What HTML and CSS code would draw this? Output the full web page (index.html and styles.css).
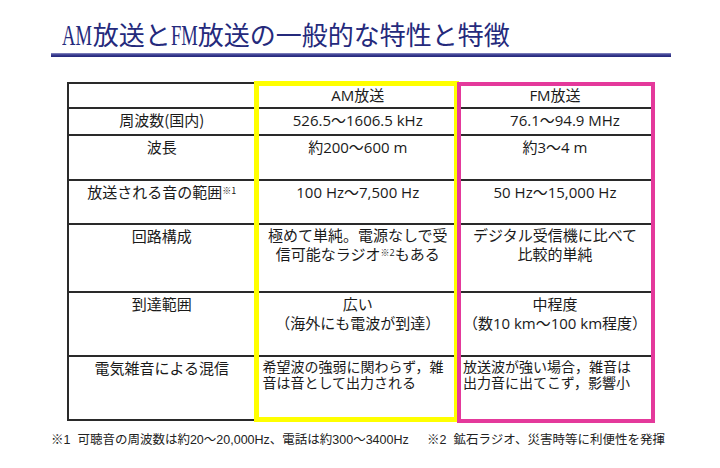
FILE: index.html
```html
<!DOCTYPE html>
<html lang="ja">
<head>
<meta charset="utf-8">
<title>AM放送とFM放送の一般的な特性と特徴</title>
<link rel="stylesheet" href="styles.css">
</head>
<body>
<div class="page">
  <h1 class="title"><span class="lat lat-am">AM</span>放送と<span class="lat lat-fm">FM</span>放送の一般的な特性と特徴</h1>
  <div class="rule"></div>

  <div class="tbl-wrap">
    <div class="tbl">
      <div class="c k"></div>
      <div class="c v">AM放送</div>
      <div class="c v">FM放送</div>

      <div class="c k">周波数(国内)</div>
      <div class="c v">526.5～1606.5 kHz</div>
      <div class="c v shift">76.1～94.9 MHz</div>

      <div class="c k">波長</div>
      <div class="c v">約200～600 m</div>
      <div class="c v">約3～4 m</div>

      <div class="c k">放送される音の範囲<sup class="note">※1</sup></div>
      <div class="c v">100 Hz～7,500 Hz</div>
      <div class="c v">50 Hz～15,000 Hz</div>

      <div class="c k">回路構成</div>
      <div class="c v multi">極めて単純。電源なしで受<br>信可能なラジオ<sup class="note">※2</sup>もある</div>
      <div class="c v multi">デジタル受信機に比べて<br>比較的単純</div>

      <div class="c k">到達範囲</div>
      <div class="c v multi2">広い<br>（海外にも電波が到達）</div>
      <div class="c v multi2">中程度<br>（数10 km～100 km程度）</div>

      <div class="c k last">電気雑音による混信</div>
      <div class="c s am-s last">希望波の強弱に関わらず，雑<br>音は音として出力される</div>
      <div class="c s fm-s last">放送波が強い場合，雑音は<br>出力音に出てこず，影響小</div>
    </div>
    <div class="frame frame-am"></div>
    <div class="frame frame-fm"></div>
  </div>

  <div class="notes">
    <p class="fn">※1&nbsp;&nbsp;可聴音の周波数は約20～20,000Hz、電話は約300～3400Hz</p>
    <p class="fn">※2&nbsp;&nbsp;鉱石ラジオ、災害時等に利便性を発揮</p>
  </div>
</div>
</body>
</html>
```

FILE: styles.css
```css
* { box-sizing: border-box; }

html, body {
  margin: 0;
  padding: 0;
  background: #ffffff;
}

body {
  width: 720px;
  height: 468px;
  overflow: hidden;
  color: #1a1a1a;
  font-family: "Noto Sans CJK JP", sans-serif;
}

.title {
  margin: 0;
  padding: 20px 0 0 62px;
  height: 50px;
  font-family: "Liberation Serif", "Noto Sans CJK JP", serif;
  font-weight: normal;
  font-size: 26px;
  line-height: 30px;
  color: #252a7c;
  white-space: nowrap;
}

.lat {
  display: inline-block;
  font-family: "Liberation Serif", serif;
  font-size: 29px;
  transform: scaleX(0.64);
  transform-origin: left center;
}

.lat-am { margin-right: -16px; }
.lat-fm { margin-right: -15px; }

.rule {
  margin: 3px 0 0 51px;
  width: 620px;
  height: 4px;
  background: linear-gradient(to bottom, #8f91c4 0%, #3a3d92 45%, #232679 100%);
}

.tbl-wrap {
  position: relative;
  margin: 25px 0 0 67px;
  width: 586px;
}

.tbl {
  display: grid;
  grid-template-columns: 187.5px 202.5px 192px;
  grid-template-rows: 25px 27px 45px 44px 68px 64px 62px;
  width: 586px;
  border: 2px solid #2a2a2a;
}

.c {
  border-bottom: 2px solid #2a2a2a;
  padding-top: 2px;
  font-size: 15px;
  line-height: 18px;
  white-space: nowrap;
  overflow: hidden;
}

.c.last { border-bottom: 0; }

.k {
  text-align: center;
  border-right: 2px solid #2a2a2a;
  font-family: "Noto Sans CJK JP", sans-serif;
}

.v {
  text-align: center;
  font-family: "Open Sans", "Noto Sans CJK JP", sans-serif;
}

.shift { padding-left: 20px; }

.multi { line-height: 19px; padding-top: 1px; }
.multi2 { line-height: 19px; }

.s {
  text-align: left;
  font-family: "Liberation Serif", "Noto Sans CJK JP", serif;
  font-size: 14px;
  line-height: 16px;
  padding-top: 3px;
}

.am-s { padding-left: 6px; }
.fm-s { padding-left: 4px; }

.note {
  font-size: 9px;
  line-height: 0;
  vertical-align: 4px;
}

.frame {
  position: absolute;
  pointer-events: none;
}

.frame-am {
  left: 187px;
  top: -1px;
  width: 205px;
  height: 341px;
  border: 5px solid #ffff00;
}

.frame-fm {
  left: 390px;
  top: 0;
  width: 198px;
  height: 341px;
  border: 4px solid #e4399b;
}

.notes {
  display: grid;
  grid-template-columns: 376px auto;
  margin-top: 11px;
  padding-left: 51px;
}

.fn {
  margin: 0;
  font-family: "Liberation Sans", "Noto Sans CJK JP", sans-serif;
  font-size: 12.5px;
  line-height: 16px;
  color: #222;
  white-space: nowrap;
}
```
